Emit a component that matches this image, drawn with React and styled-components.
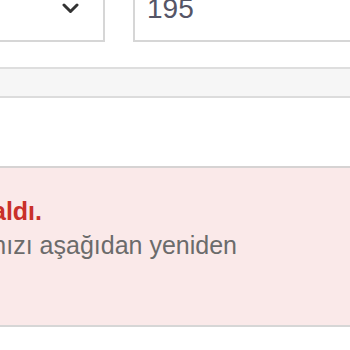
import React from "react";
import styled, { createGlobalStyle } from "styled-components";

const Global = createGlobalStyle`
  html, body { margin: 0; padding: 0; background: #ffffff; overflow: hidden; }
  body { font-family: "Liberation Sans", Arial, sans-serif; }
`;

const Viewport = styled.div`
  width: 350px;
  height: 350px;
  overflow: hidden;
`;

const Page = styled.div`
  width: 700px;
  margin-left: -100px;
  margin-top: -12px;
  display: flex;
  flex-direction: column;
`;

const FieldRow = styled.div`
  display: flex;
  gap: 28px;
`;

const Select = styled.div`
  box-sizing: border-box;
  width: 205px;
  height: 54px;
  border: 2px solid #d6d6d6;
  background: #fff;
  display: flex;
  align-items: flex-start;
  justify-content: flex-end;
  padding: 13px 24px 0 0;
`;

const Chevron = styled.svg`
  width: 17px;
  height: 11px;
  display: block;
`;

const Input = styled.div`
  box-sizing: border-box;
  flex: 1;
  height: 54px;
  border: 2px solid #d6d6d6;
  background: #fff;
  padding: 5px 15px 0 12px;
  font-size: 28px;
  line-height: 28px;
  color: #555566;
`;

const Well = styled.div`
  margin-top: 25px;
  height: 31px;
  box-sizing: border-box;
  background: #f6f6f6;
  border-top: 2px solid #dedede;
  border-bottom: 2px solid #dcdcdc;
`;

const Alert = styled.div`
  margin-top: 68px;
  box-sizing: border-box;
  height: 161px;
  background: #fae9e9;
  border-top: 2px solid #d6d3d3;
  border-bottom: 2px solid #d6d6d6;
  padding-top: 26px;
  display: flex;
  flex-direction: column;
`;

const Line = styled.div`
  width: 500px;
  margin-left: ${(p) => p.$right - 500 + 100}px;
  text-align: right;
  white-space: nowrap;
  font-size: 25px;
  line-height: 34px;
  font-weight: ${(p) => (p.$bold ? 700 : 400)};
  color: ${(p) => (p.$bold ? "#c9302a" : "#6b6b6b")};
`;

export default function App() {
  return (
    <Viewport>
      <Global />
      <Page>
        <FieldRow>
          <Select>
            <Chevron viewBox="0 0 17 11">
              <path d="M2 2 L8.5 8.5 L15 2" fill="none" stroke="#333" strokeWidth="3" strokeLinecap="round" strokeLinejoin="round" />
            </Chevron>
          </Select>
          <Input>195</Input>
        </FieldRow>
        <Well />
        <Alert>
          <Line $bold $right={42}>İşleminiz yarım kaldı.</Line>
          <Line $right={237}>Lütfen kartınızı aşağıdan yeniden</Line>
        </Alert>
      </Page>
    </Viewport>
  );
}
